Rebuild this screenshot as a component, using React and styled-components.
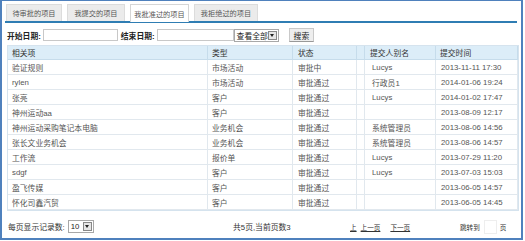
import React from "react";
import styled, { createGlobalStyle } from "styled-components";

const Global = createGlobalStyle`
  html, body { margin: 0; padding: 0; background: #fff; }
  * { box-sizing: border-box; }
  body { font-family: "Liberation Sans", "Noto Sans CJK SC", sans-serif; font-size: 7.8px; color: #444; }
`;

const Frame = styled.div`
  width: 523px;
  height: 240px;
  border: 2px solid #4f81bd;
  border-top-width: 1px;
  padding: 3px 4px 0 3px;
  display: flex;
  flex-direction: column;
  background: #fff;
`;

const TabBar = styled.div`
  display: flex;
  gap: 5px;
  padding-left: 1px;
  border-bottom: 2px solid #2f7db3;
  height: 20px;
  align-items: flex-end;
`;

const Tab = styled.div`
  height: ${(p) => (p.$active ? "18px" : "17px")};
  width: ${(p) => p.$w}px;
  display: flex;
  align-items: center;
  justify-content: center;
  background: ${(p) => (p.$active ? "#fff" : "#ebebeb")};
  border: 1px solid ${(p) => (p.$active ? "#d6d6d6" : "#dcdcdc")};
  border-bottom: none;
  color: #555;
  font-size: 7.2px;
  margin-bottom: ${(p) => (p.$active ? "-1px" : "0")};
`;

const Filter = styled.div`
  display: flex;
  align-items: center;
  height: 15px;
  margin-top: 5px;
  padding-left: 2px;
`;

const Label = styled.span`
  font-weight: bold;
  color: #222;
  margin-right: 2px;
  margin-left: ${(p) => p.$ml || 0}px;
`;

const TextInput = styled.div`
  width: ${(p) => p.$w}px;
  height: 12px;
  border: 1px solid #c8c8c8;
  background: #fff;
`;

const Select = styled.div`
  display: flex;
  align-items: center;
  height: 13px;
  width: ${(p) => p.$w}px;
  border: 1px solid #a8a8a8;
  background: #fff;
  padding-left: 2px;
  color: #222;
  white-space: nowrap;
  margin-left: ${(p) => p.$ml || 0}px;
  justify-content: space-between;
`;

const Arrow = styled.span`
  width: 9px;
  height: 9px;
  margin-right: 1px;
  flex: none;
  border: 1px solid #888;
  background: #e6e6e6;
  display: flex;
  align-items: center;
  justify-content: center;
  &::after {
    content: "";
    border-left: 2.5px solid transparent;
    border-right: 2.5px solid transparent;
    border-top: 3px solid #222;
  }
`;

const Button = styled.div`
  margin-left: 10px;
  height: 14px;
  padding: 0 4px;
  display: flex;
  align-items: center;
  background: #eeeeee;
  border: 1px solid #c9c9c9;
  border-bottom-color: #999;
  color: #222;
`;

const Table = styled.div`
  margin-top: 3px;
  margin-left: 2px;
  width: 512px;
  border: 1px solid #d5e3ee;
  display: grid;
  grid-template-columns: 200px 85px 64px 8px 71px 82px;
`;

const HeadCell = styled.div`
  height: 14px;
  background: #dcedf8;
  border-right: 1px solid #c6dceb;
  border-bottom: 1px solid #c6dceb;
  padding-left: ${(p) => p.$pl ?? 4}px;
  display: flex;
  align-items: center;
  color: #333;
  &:last-child { border-right: none; }
`;

const Cell = styled.div`
  height: 15px;
  border-right: 1px solid #e1e8ee;
  border-bottom: 1px solid #e1e8ee;
  padding-left: ${(p) => p.$pl ?? 4}px;
  display: flex;
  align-items: center;
  color: #555;
  white-space: nowrap;
  overflow: hidden;
  background: #fff;
`;

const Footer = styled.div`
  display: flex;
  align-items: center;
  height: 24px;
  margin-top: 4px;
  padding-left: 3px;
`;

const FooterLeft = styled.div`
  display: flex;
  align-items: center;
  width: 225px;
  color: #333;
`;

const PageInfo = styled.div`
  width: 117px;
  color: #333;
`;

const Links = styled.div`
  display: flex;
  gap: 4px;
  width: 110px;
  color: #333;
  font-size: 6.6px;
`;

const Link = styled.span`
  text-decoration: underline;
  margin-left: ${(p) => p.$ml || 0}px;
`;

const Jump = styled.div`
  display: flex;
  align-items: center;
  color: #333;
  font-size: 6.6px;
`;

const JumpBox = styled.div`
  width: 13px;
  height: 14px;
  margin: 0 3px 0 4px;
  background: #fff;
  border: 1px solid #eee;
`;

const rows = [
  ["验证规则", "市场活动", "审批中", "Lucys", "2013-11-11 17:30"],
  ["rylen", "市场活动", "审批通过", "行政员1", "2014-01-06 19:24"],
  ["张亮", "客户", "审批通过", "Lucys", "2014-01-02 17:47"],
  ["神州运动aa", "客户", "审批通过", "", "2013-08-09 12:17"],
  ["神州运动采购笔记本电脑", "业务机会", "审批通过", "系统管理员", "2013-08-06 14:56"],
  ["张长文业务机会", "业务机会", "审批通过", "系统管理员", "2013-08-06 14:57"],
  ["工作流", "报价单", "审批通过", "Lucys", "2013-07-29 11:20"],
  ["sdgf", "客户", "审批通过", "Lucys", "2013-07-03 15:03"],
  ["盈飞传媒", "客户", "审批通过", "", "2013-06-05 14:57"],
  ["怀化司鑫汽贸", "客户", "审批通过", "", "2013-06-05 14:45"],
];

const tabs = [
  ["待审批的项目", 56],
  ["我提交的项目", 58],
  ["我批准过的项目", 59, true],
  ["我拒绝过的项目", 64],
];

export default function App() {
  return (
    <>
      <Global />
      <Frame>
        <TabBar>
          {tabs.map(([t, w, a]) => (
            <Tab key={t} $w={w} $active={a}>{t}</Tab>
          ))}
        </TabBar>
        <Filter>
          <Label>开始日期:</Label>
          <TextInput $w={75} />
          <Label $ml={3}>结束日期:</Label>
          <TextInput $w={77} />
          <Select $w={45}>查看全部<Arrow /></Select>
          <Button>搜索</Button>
        </Filter>
        <Table>
          <HeadCell>相关项</HeadCell>
          <HeadCell>类型</HeadCell>
          <HeadCell $pl={5}>状态</HeadCell>
          <HeadCell $pl={0} />
          <HeadCell $pl={5}>提交人别名</HeadCell>
          <HeadCell>提交时间</HeadCell>
          {rows.map((r, i) => (
            <React.Fragment key={i}>
              <Cell>{r[0]}</Cell>
              <Cell>{r[1]}</Cell>
              <Cell $pl={5}>{r[2]}</Cell>
              <Cell $pl={0} />
              <Cell $pl={7}>{r[3]}</Cell>
              <Cell $pl={5}>{r[4]}</Cell>
            </React.Fragment>
          ))}
        </Table>
        <Footer>
          <FooterLeft>
            每页显示记录数:
            <Select $w={26} $ml={3}>10<Arrow /></Select>
          </FooterLeft>
          <PageInfo>共5页,当前页数3</PageInfo>
          <Links>
            <Link>上</Link>
            <Link>上一页</Link>
            <Link $ml={6}>下一页</Link>
          </Links>
          <Jump>
            跳转到<JumpBox />页
          </Jump>
        </Footer>
      </Frame>
    </>
  );
}
